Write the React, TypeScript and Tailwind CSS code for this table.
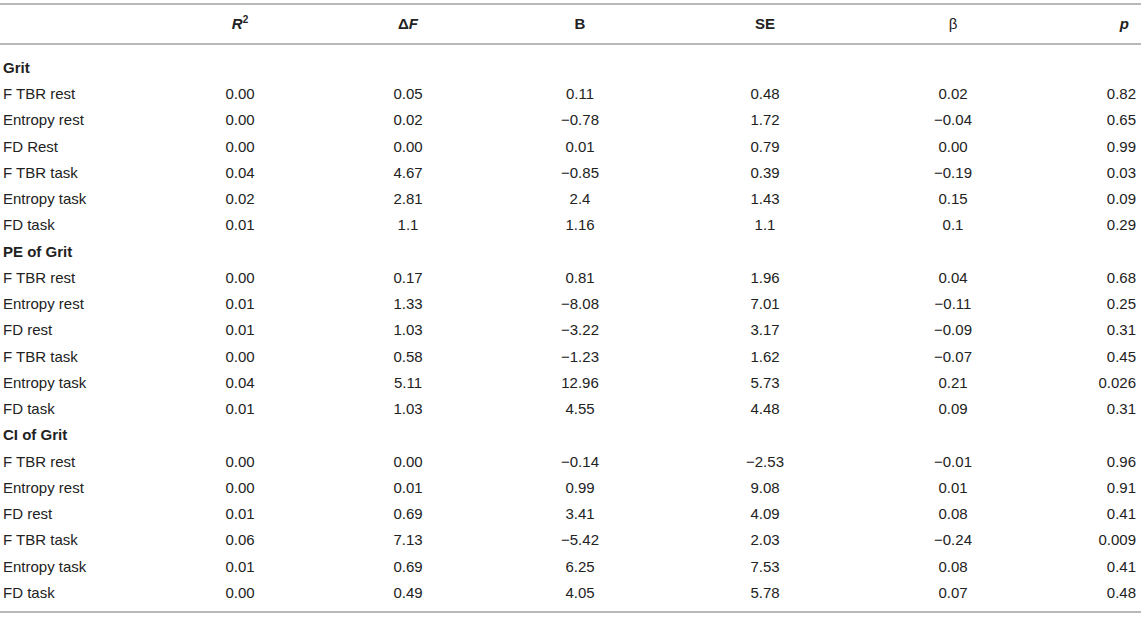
import React from 'react'

// One row of the regression table
interface Row {
  label: string;
  values: string[];
}

interface Section {
  title: string;
  rows: Row[];
}

const sections: Section[] = [
  {
    title: "Grit",
    rows: [
      { label: "F TBR rest", values: ["0.00", "0.05", "0.11", "0.48", "0.02", "0.82"] },
      { label: "Entropy rest", values: ["0.00", "0.02", "−0.78", "1.72", "−0.04", "0.65"] },
      { label: "FD Rest", values: ["0.00", "0.00", "0.01", "0.79", "0.00", "0.99"] },
      { label: "F TBR task", values: ["0.04", "4.67", "−0.85", "0.39", "−0.19", "0.03"] },
      { label: "Entropy task", values: ["0.02", "2.81", "2.4", "1.43", "0.15", "0.09"] },
      { label: "FD task", values: ["0.01", "1.1", "1.16", "1.1", "0.1", "0.29"] },
    ],
  },
  {
    title: "PE of Grit",
    rows: [
      { label: "F TBR rest", values: ["0.00", "0.17", "0.81", "1.96", "0.04", "0.68"] },
      { label: "Entropy rest", values: ["0.01", "1.33", "−8.08", "7.01", "−0.11", "0.25"] },
      { label: "FD rest", values: ["0.01", "1.03", "−3.22", "3.17", "−0.09", "0.31"] },
      { label: "F TBR task", values: ["0.00", "0.58", "−1.23", "1.62", "−0.07", "0.45"] },
      { label: "Entropy task", values: ["0.04", "5.11", "12.96", "5.73", "0.21", "0.026"] },
      { label: "FD task", values: ["0.01", "1.03", "4.55", "4.48", "0.09", "0.31"] },
    ],
  },
  {
    title: "CI of Grit",
    rows: [
      { label: "F TBR rest", values: ["0.00", "0.00", "−0.14", "−2.53", "−0.01", "0.96"] },
      { label: "Entropy rest", values: ["0.00", "0.01", "0.99", "9.08", "0.01", "0.91"] },
      { label: "FD rest", values: ["0.01", "0.69", "3.41", "4.09", "0.08", "0.41"] },
      { label: "F TBR task", values: ["0.06", "7.13", "−5.42", "2.03", "−0.24", "0.009"] },
      { label: "Entropy task", values: ["0.01", "0.69", "6.25", "7.53", "0.08", "0.41"] },
      { label: "FD task", values: ["0.00", "0.49", "4.05", "5.78", "0.07", "0.48"] },
    ],
  },
];

const gridCols = "grid grid-cols-[154px_172px_164px_180px_190px_186px_1fr] items-center";

const App: React.FC = () => {
  return (
    <div className="w-[1145px] h-[622px] bg-white text-[#222] text-[15px] font-['Liberation_Sans',Arial,sans-serif]">
      <div className="w-[1141px] pt-[3px]">
        {/* Header */}
        <div className={`${gridCols} h-[42px] border-y-2 border-[#b8b8b8] font-bold`}>
          <div></div>
          <div className="text-center italic">
            R<span className="text-[10px] not-italic align-[6px]">2</span>
          </div>
          <div className="text-center">
            Δ<span className="italic">F</span>
          </div>
          <div className="text-center">B</div>
          <div className="text-center">SE</div>
          <div className="text-center font-normal">β</div>
          <div className="text-right pr-[12px] italic">p</div>
        </div>

        {/* Body */}
        <div className="pt-[10px] pb-[5px] border-b-2 border-[#b8b8b8]">
          {sections.map((section) => (
            <div key={section.title}>
              <div className={`${gridCols} h-[26.25px]`}>
                <div className="pl-[3px] font-bold whitespace-nowrap">{section.title}</div>
              </div>
              {section.rows.map((row, i) => (
                <div key={i} className={`${gridCols} h-[26.25px]`}>
                  <div className="pl-[3px] whitespace-nowrap">{row.label}</div>
                  {row.values.map((v, j) => (
                    <div
                      key={j}
                      className={j === 5 ? "text-right pr-[5px]" : "text-center"}
                    >
                      {v}
                    </div>
                  ))}
                </div>
              ))}
            </div>
          ))}
        </div>
      </div>
    </div>
  );
}

export default App
